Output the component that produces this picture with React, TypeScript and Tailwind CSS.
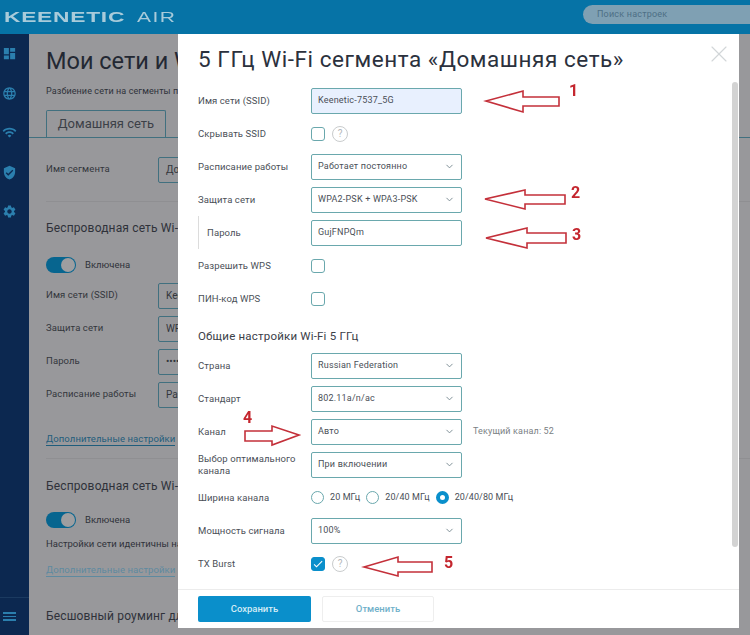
import React from "react";
import { MdDashboard, MdLanguage, MdWifi, MdVerifiedUser, MdSettings, MdCheck } from "react-icons/md";
import { LuChevronDown, LuX } from "react-icons/lu";

const FONT = "font-['Roboto','Liberation_Sans',sans-serif]";

function Row({ label, children, indent }: { label: string; children: React.ReactNode; indent?: boolean }) {
  return (
    <div className="flex items-center h-[33px]">
      <div className={`w-[113px] shrink-0 text-[9.5px] leading-[12px] tracking-[0.1px] text-[#4a4f57] ${indent ? "pl-2 border-l border-[#dcdcdc] h-[33px] flex items-center" : ""}`}>
        {label}
      </div>
      {children}
    </div>
  );
}

function Field({ value, select, autofill }: { value: string; select?: boolean; autofill?: boolean }) {
  return (
    <div className={`w-[151px] h-[26px] rounded-[2px] border border-[#6aa8ad] flex items-center justify-between pl-[6px] pr-[6px] text-[9px] tracking-[0.2px] text-[#4a4f57] ${autofill ? "bg-[#e8f0fe]" : "bg-white"}`}>
      <span>{value}</span>
      {select && <LuChevronDown className="w-[11px] h-[11px] text-[#76888f]" />}
    </div>
  );
}

function Check({ checked }: { checked?: boolean }) {
  return (
    <div className={`w-[14px] h-[14px] rounded-[3px] border flex items-center justify-center ${checked ? "bg-[#0a8fcb] border-[#0a8fcb]" : "bg-white border-[#6aa8ad]"}`}>
      {checked && <MdCheck className="w-[12px] h-[12px] text-white" />}
    </div>
  );
}

function Help() {
  return (
    <div className="ml-[7px] w-[16px] h-[16px] rounded-full border border-[#c9cccd] flex items-center justify-center text-[10px] text-[#b4b8ba]">?</div>
  );
}

function Radio({ on, label }: { on?: boolean; label: string }) {
  return (
    <div className="flex items-center gap-[6px] text-[9px] text-[#4a4f57] tracking-[0.1px]">
      <div className={`rounded-full bg-white w-[13px] h-[13px] ${on ? "border-[4px] border-[#0a8fcb]" : "border border-[#6aa8ad]"}`} />
      <span>{label}</span>
    </div>
  );
}

function BgRow({ label, value }: { label: string; value: string }) {
  return (
    <div className="flex items-center h-[33px]">
      <div className="w-[112px] shrink-0 text-[9.5px] tracking-[0.1px] text-[#33363c]">{label}</div>
      <div className="w-[80px] shrink-0 h-[26px] rounded-[2px] border border-[#41707f] flex items-center pl-[7px] text-[10px] text-[#33363c]">{value}</div>
    </div>
  );
}

function Toggle() {
  return (
    <div className="w-[30px] h-[16px] rounded-full bg-[#07658f] flex items-center justify-end pr-[1px]">
      <div className="w-[14px] h-[14px] rounded-full bg-[#9e9ea0]" />
    </div>
  );
}

function Sidebar() {
  const icon = "w-[15px] h-[15px] text-[#2b7fae]";
  return (
    <aside className="w-[29px] shrink-0 bg-[#0c2850] flex flex-col">
      <div className="flex flex-col gap-[24.5px] pt-[12px] pl-[2px]">
        <MdDashboard className={icon} />
        <MdLanguage className={icon} />
        <MdWifi className={icon} />
        <MdVerifiedUser className={icon} />
        <MdSettings className={icon} />
      </div>
      <div className="mt-auto w-full border-t border-[#1b3a60] h-[38px] pt-[14px] pl-[3px]">
        <div className="w-[13px] flex flex-col gap-[2px]">
          <div className="h-[1.5px] bg-[#2b7fae]" />
          <div className="h-[1.5px] bg-[#2b7fae]" />
          <div className="h-[1.5px] bg-[#2b7fae]" />
        </div>
      </div>
    </aside>
  );
}

/* Part of the page that lies under the dialog: it stops where the dialog begins. */
function Clip({ children, className = "" }: { children: React.ReactNode; className?: string }) {
  return <div className={`ml-[17px] w-[132px] overflow-hidden ${className}`}>{children}</div>;
}

function Background() {
  return (
    <main className="flex-1 min-w-0 bg-[#98989b] text-[#2f323a] overflow-hidden">
      <Clip className="pt-[12px]">
        <h1 className="text-[23.5px] leading-[30px] whitespace-nowrap text-[#232833]">Мои сети и Wi-Fi</h1>
        <p className="mt-[9px] text-[9px] leading-[12px] whitespace-nowrap tracking-[0.1px]">Разбиение сети на сегменты позволяет</p>
      </Clip>
      <div className="mt-[13px] pl-[17px] border-b border-[#41707f]">
        <div className="w-[120px] h-[27px] rounded-t-[2px] border border-b-0 border-[#41707f] flex items-center justify-center text-[13px] text-[#3c4047]">Домашняя сеть</div>
      </div>
      <Clip className="mt-[15px]"><BgRow label="Имя сегмента" value="Домашняя" /></Clip>
      <div className="mt-[15px] ml-[17px] border-t border-[#8f8f92]" />
      <Clip className="mt-[18px]">
        <h2 className="text-[12px] leading-[16px] whitespace-nowrap tracking-[0.15px]">Беспроводная сеть Wi-Fi 2,4 ГГц</h2>
        <div className="mt-[21px] flex items-center gap-[9px] text-[9.5px] h-[16px]"><Toggle /><span>Включена</span></div>
        <div className="mt-[6px]">
          <BgRow label="Имя сети (SSID)" value="Keenetic" />
          <BgRow label="Защита сети" value="WPA2-PSK" />
          <BgRow label="Пароль" value="••••••••" />
          <BgRow label="Расписание работы" value="Работает" />
        </div>
        <div className="mt-[21px] inline-block text-[9.5px] leading-[13px] tracking-[0.1px] whitespace-nowrap text-[#1f5d7c] border-b border-[#1f5d7c]">Дополнительные настройки</div>
      </Clip>
      <div className="mt-[9px] ml-[17px] border-t border-[#8f8f92]" />
      <Clip className="mt-[19px]">
        <h2 className="text-[12px] leading-[16px] whitespace-nowrap tracking-[0.15px]">Беспроводная сеть Wi-Fi 5 ГГц</h2>
        <div className="mt-[18px] flex items-center gap-[9px] text-[9.5px] h-[16px]"><Toggle /><span>Включена</span></div>
        <p className="mt-[9px] text-[9.5px] leading-[13px] whitespace-nowrap">Настройки сети идентичны настройкам</p>
        <div className="mt-[13px] inline-block text-[9.5px] leading-[13px] tracking-[0.1px] whitespace-nowrap text-[#5e8aa0] border-b border-[#5e8aa0]">Дополнительные настройки</div>
        <h2 className="mt-[28px] text-[12px] leading-[16px] whitespace-nowrap tracking-[0.15px]">Бесшовный роуминг для</h2>
      </Clip>
    </main>
  );
}

function Modal() {
  return (
    <section className="absolute left-[178px] top-[34px] w-[561px] h-[594px] bg-white flex flex-col">
      <LuX strokeWidth={1} className="absolute right-[6px] top-[6px] w-[28px] h-[28px] text-[#d2d6d8]" />
      <div className="absolute right-[1px] top-[48px] w-[6px] h-[465px] rounded-[3px] bg-[#d3d3d3]" />
      <div className="pl-[20px] flex-1">
        <h3 className="pt-[11px] h-[50px] text-[22.5px] leading-[28px] tracking-[0.55px] whitespace-nowrap text-[#2b313d]">5 ГГц Wi-Fi сегмента «Домашняя сеть»</h3>
        <Row label="Имя сети (SSID)"><Field value="Keenetic-7537_5G" autofill /></Row>
        <Row label="Скрывать SSID"><Check /><Help /></Row>
        <Row label="Расписание работы"><Field value="Работает постоянно" select /></Row>
        <Row label="Защита сети"><Field value="WPA2-PSK + WPA3-PSK" select /></Row>
        <Row label="Пароль" indent><Field value="GujFNPQm" /></Row>
        <Row label="Разрешить WPS"><Check /></Row>
        <Row label="ПИН-код WPS"><Check /></Row>
        <div className="h-[34px] pt-[12px] text-[11.5px] leading-[18px] tracking-[0.2px] text-[#3b4048]">Общие настройки Wi-Fi 5 ГГц</div>
        <Row label="Страна"><Field value="Russian Federation" select /></Row>
        <Row label="Стандарт"><Field value="802.11a/n/ac" select /></Row>
        <Row label="Канал">
          <Field value="Авто" select />
          <span className="ml-[11px] text-[9px] tracking-[0.15px] text-[#7b7f84]">Текущий канал: 52</span>
        </Row>
        <Row label="Выбор оптимального канала"><Field value="При включении" select /></Row>
        <Row label="Ширина канала">
          <div className="flex items-center gap-[6px]">
            <Radio label="20 МГц" />
            <Radio label="20/40 МГц" />
            <Radio on label="20/40/80 МГц" />
          </div>
        </Row>
        <Row label="Мощность сигнала"><Field value="100%" select /></Row>
        <Row label="TX Burst"><Check checked /><Help /></Row>
      </div>
      <footer className="h-[39px] border-t border-[#ececec] pl-[20px] pt-[6px] flex gap-[11px]">
        <button className="w-[113px] h-[26px] rounded-[2px] bg-[#0a8fcb] text-[9.5px] font-medium text-[#d4ecf6]">Сохранить</button>
        <button className="w-[112px] h-[26px] rounded-[2px] border border-[#eeeeee] bg-white text-[9.5px] font-medium text-[#6fb0c9]">Отменить</button>
      </footer>
    </section>
  );
}

const ARROWS = [
  "486,101 523,91 523,97 559,97 559,106 523,106 523,112",
  "485,199 525,190 525,195 565,195 565,204 525,204 525,209",
  "486,238 527,228 527,233 566,233 566,243 527,243 527,248",
  "299,435 272,426 272,431 245,431 245,441 272,441 272,445",
  "364,567 398,557 398,562 432,562 432,572 398,572 398,576",
];

const NUMBERS = [
  { n: "1", cls: "left-[569px] top-[81px]" },
  { n: "2", cls: "left-[571px] top-[183px]" },
  { n: "3", cls: "left-[572px] top-[225px]" },
  { n: "4", cls: "left-[243px] top-[408px]" },
  { n: "5", cls: "left-[444px] top-[553px]" },
];

export default function App() {
  return (
    <div className={`relative w-[750px] h-[635px] overflow-hidden flex flex-col blur-[0.35px] ${FONT}`}>
      <header className="h-[34px] shrink-0 bg-[#0673a6] flex items-center justify-between pl-[4px]">
        <div className="flex items-center whitespace-nowrap text-[#a8cbda] font-['Liberation_Sans',sans-serif]">
          <span className="w-[133px] text-[15.5px] font-bold tracking-[0.5px] origin-left scale-x-[1.47]">KEENETIC</span>
          <span className="text-[15px] font-normal tracking-[1px] origin-left scale-x-[1.4]">AIR</span>
        </div>
        <div className="self-start mt-[5px] w-[167px] h-[19px] rounded-l-full bg-[#7fa0b3] pl-[14px] flex items-center text-[9px] tracking-[0.2px] text-[#4d6f85]">Поиск настроек</div>
      </header>
      <div className="flex flex-1 min-h-0">
        <Sidebar />
        <Background />
      </div>
      <Modal />
      <svg className="absolute inset-0 pointer-events-none" width="750" height="635" viewBox="0 0 750 635" fill="none">
        {ARROWS.map((p) => (
          <polygon key={p} points={p} stroke="#c4303a" strokeWidth="1.6" strokeLinejoin="miter" />
        ))}
      </svg>
      {NUMBERS.map((x) => (
        <span key={x.n} className={`absolute ${x.cls} text-[16px] leading-[20px] font-bold text-[#c4262e]`}>{x.n}</span>
      ))}
    </div>
  );
}
